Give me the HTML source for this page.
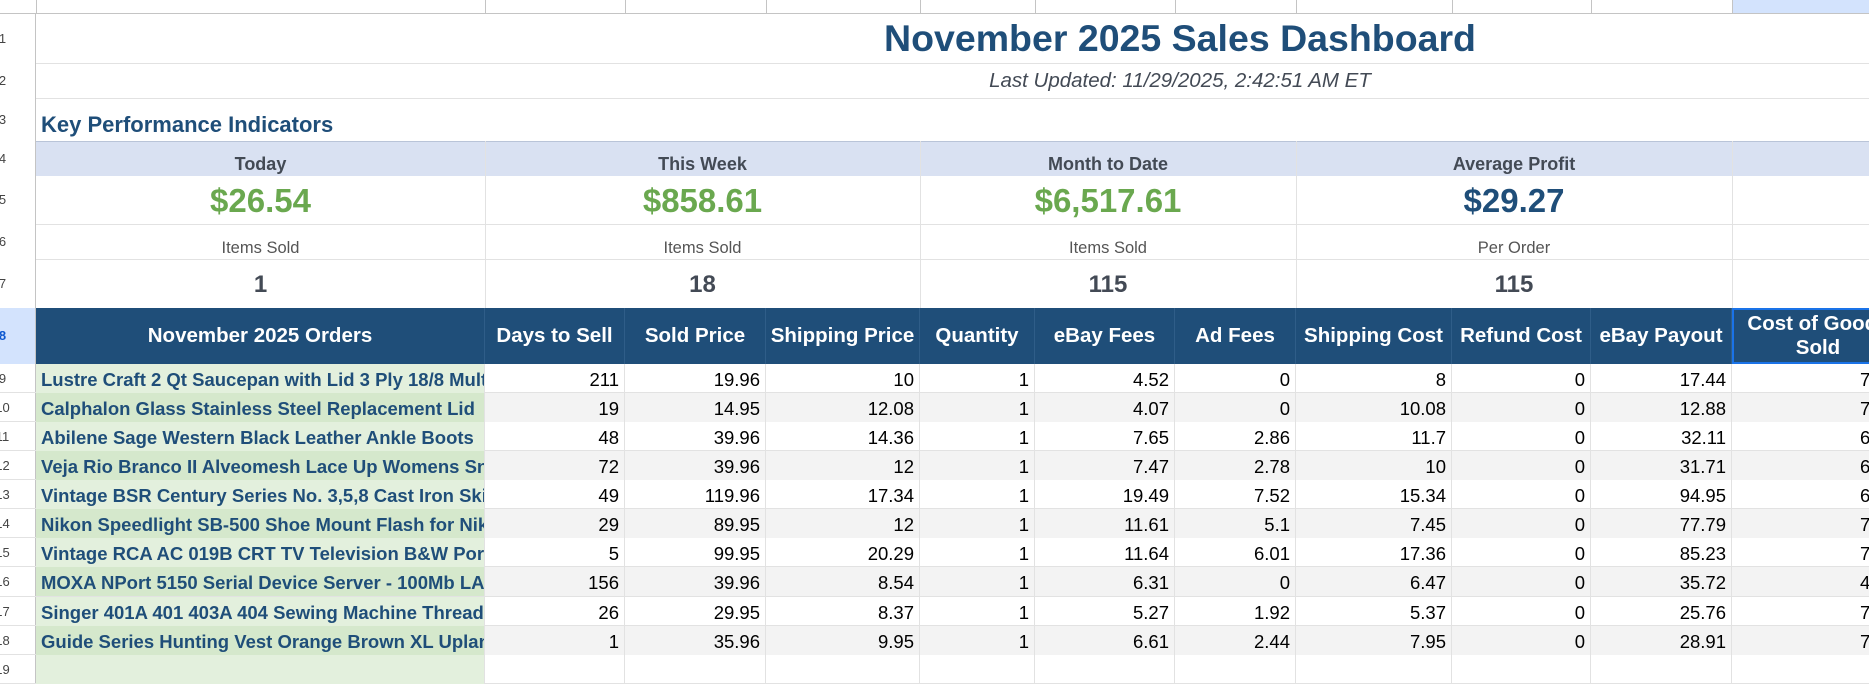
<!DOCTYPE html>
<html><head><meta charset="utf-8"><style>
*{box-sizing:border-box;margin:0;padding:0}
body{width:1869px;height:663px;overflow:hidden;background:#fff;font-family:"Liberation Sans",Arial,sans-serif;position:relative}
.a{position:absolute}
.hl{position:absolute;left:36px;width:1833px;height:1px;background:#e2e2e2}
.vl{position:absolute;width:1px;background:#e2e2e2}
.rn{position:absolute;left:-30px;width:66px;font-size:13px;color:#444;text-align:center;border-right:1px solid #c4c4c4;background:#fff}
.t{position:absolute;display:flex;align-items:flex-end;justify-content:center;white-space:nowrap;overflow:hidden}
.r{position:absolute;left:0;width:1869px;height:29px;border-bottom:1px solid #e2e2e2}
.r>div{position:absolute;top:0;height:29px;font-size:18.5px;color:#000;text-align:right;padding:5px 5px 0 0;border-right:1px solid #e2e2e2;white-space:nowrap;overflow:hidden}
.r>div:nth-child(1){left:36px;width:449px;text-align:left;padding-left:5px;font-weight:bold;color:#1f4e79;background:#e3f0dd}
.r.e>div:nth-child(1){background:#d5e8cc}
.r.e>div{background:#f3f3f3}
.r>div:nth-child(2){left:485px;width:140px}
.r>div:nth-child(3){left:625px;width:141px}
.r>div:nth-child(4){left:766px;width:154px}
.r>div:nth-child(5){left:920px;width:115px}
.r>div:nth-child(6){left:1035px;width:140px}
.r>div:nth-child(7){left:1175px;width:121px}
.r>div:nth-child(8){left:1296px;width:156px}
.r>div:nth-child(9){left:1452px;width:139px}
.r>div:nth-child(10){left:1591px;width:141px}
.r>div:nth-child(11){left:1732px;width:170px}
.h{position:absolute;top:308px;height:56px;background:#1f4e79;color:#fff;font-weight:bold;font-size:20.5px;display:flex;align-items:center;justify-content:center;text-align:center;border-right:1px solid #2f5d88;line-height:24px;white-space:nowrap}
.kl{font-size:18px;font-weight:bold;color:#434a55}
.kv{font-size:33px;font-weight:bold;color:#6aa84f}
.ks{font-size:16.5px;color:#555}
.kc{font-size:24px;font-weight:bold;color:#434a55}
</style></head><body>
<div class="a" style="left:0;top:0;width:1869px;height:14px;background:#fff;border-bottom:1px solid #c4c4c4"></div>
<div class="a" style="left:1732px;top:0;width:137px;height:14px;background:#d3e3fd;border-bottom:1px solid #c4c4c4"></div>
<div class="a" style="left:36px;top:0;width:1px;height:14px;background:#c4c4c4"></div>
<div class="a" style="left:485px;top:0;width:1px;height:14px;background:#c4c4c4"></div>
<div class="a" style="left:625px;top:0;width:1px;height:14px;background:#c4c4c4"></div>
<div class="a" style="left:766px;top:0;width:1px;height:14px;background:#c4c4c4"></div>
<div class="a" style="left:920px;top:0;width:1px;height:14px;background:#c4c4c4"></div>
<div class="a" style="left:1035px;top:0;width:1px;height:14px;background:#c4c4c4"></div>
<div class="a" style="left:1175px;top:0;width:1px;height:14px;background:#c4c4c4"></div>
<div class="a" style="left:1296px;top:0;width:1px;height:14px;background:#c4c4c4"></div>
<div class="a" style="left:1452px;top:0;width:1px;height:14px;background:#c4c4c4"></div>
<div class="a" style="left:1591px;top:0;width:1px;height:14px;background:#c4c4c4"></div>
<div class="a" style="left:1732px;top:0;width:1px;height:14px;background:#c4c4c4"></div>

<div class="hl" style="top:63px"></div>
<div class="hl" style="top:98px"></div>
<div class="a" style="left:36px;top:141px;width:1833px;height:35px;background:#d9e1f2;border-top:1px solid #b9c4d8"></div>
<div class="hl" style="top:224px"></div>
<div class="hl" style="top:259px"></div>
<div class="vl" style="left:485px;top:141px;height:167px"></div>
<div class="vl" style="left:920px;top:141px;height:167px"></div>
<div class="vl" style="left:1296px;top:141px;height:167px"></div>
<div class="vl" style="left:1732px;top:141px;height:167px"></div>

<div class="rn" style="top:14px;height:49px;line-height:49px">1</div>
<div class="rn" style="top:63px;height:35px;line-height:35px">2</div>
<div class="rn" style="top:98px;height:43px;line-height:43px">3</div>
<div class="rn" style="top:141px;height:35px;line-height:35px">4</div>
<div class="rn" style="top:176px;height:48px;line-height:48px">5</div>
<div class="rn" style="top:224px;height:35px;line-height:35px">6</div>
<div class="rn" style="top:259px;height:49px;line-height:49px">7</div>
<div class="rn" style="top:308px;height:56px;line-height:56px;background:#d3e3fd;font-weight:bold;color:#0b57d0">8</div>
<div class="rn" style="top:364px;height:29px;line-height:29px">9</div>
<div class="rn" style="top:393px;height:29px;line-height:29px">10</div>
<div class="rn" style="top:422px;height:29px;line-height:29px">11</div>
<div class="rn" style="top:451px;height:29px;line-height:29px">12</div>
<div class="rn" style="top:480px;height:29px;line-height:29px">13</div>
<div class="rn" style="top:509px;height:29px;line-height:29px">14</div>
<div class="rn" style="top:538px;height:29px;line-height:29px">15</div>
<div class="rn" style="top:567px;height:30px;line-height:30px">16</div>
<div class="rn" style="top:597px;height:29px;line-height:29px">17</div>
<div class="rn" style="top:626px;height:29px;line-height:29px">18</div>
<div class="rn" style="top:655px;height:29px;line-height:29px">19</div>

<div class="t" style="left:780px;width:800px;top:14px;height:49px;padding-bottom:3px;font-size:37.5px;font-weight:bold;color:#1f4e79">November 2025 Sales Dashboard</div>
<div class="t" style="left:780px;width:800px;top:63px;height:35px;padding-bottom:5px;font-size:20.5px;font-style:italic;color:#434a55">Last Updated: 11/29/2025, 2:42:51 AM ET</div>
<div class="t" style="left:41px;width:500px;top:98px;height:43px;padding-bottom:3px;justify-content:flex-start;font-size:22px;font-weight:bold;color:#1f4e79">Key Performance Indicators</div>

<div class="t kl" style="left:36px;width:449px;top:141px;height:35px;padding-bottom:1px">Today</div>
<div class="t kl" style="left:485px;width:435px;top:141px;height:35px;padding-bottom:1px">This Week</div>
<div class="t kl" style="left:920px;width:376px;top:141px;height:35px;padding-bottom:1px">Month to Date</div>
<div class="t kl" style="left:1296px;width:436px;top:141px;height:35px;padding-bottom:1px">Average Profit</div>

<div class="t kv" style="left:36px;width:449px;top:176px;height:48px;padding-bottom:4px">$26.54</div>
<div class="t kv" style="left:485px;width:435px;top:176px;height:48px;padding-bottom:4px">$858.61</div>
<div class="t kv" style="left:920px;width:376px;top:176px;height:48px;padding-bottom:4px">$6,517.61</div>
<div class="t kv" style="left:1296px;width:436px;top:176px;height:48px;padding-bottom:4px;color:#1f4e79">$29.27</div>

<div class="t ks" style="left:36px;width:449px;top:224px;height:35px;padding-bottom:1px">Items Sold</div>
<div class="t ks" style="left:485px;width:435px;top:224px;height:35px;padding-bottom:1px">Items Sold</div>
<div class="t ks" style="left:920px;width:376px;top:224px;height:35px;padding-bottom:1px">Items Sold</div>
<div class="t ks" style="left:1296px;width:436px;top:224px;height:35px;padding-bottom:1px">Per Order</div>

<div class="t kc" style="left:36px;width:449px;top:259px;height:49px;padding-bottom:9px">1</div>
<div class="t kc" style="left:485px;width:435px;top:259px;height:49px;padding-bottom:9px">18</div>
<div class="t kc" style="left:920px;width:376px;top:259px;height:49px;padding-bottom:9px">115</div>
<div class="t kc" style="left:1296px;width:436px;top:259px;height:49px;padding-bottom:9px">115</div>

<div class="h" style="left:36px;width:449px">November 2025 Orders</div>
<div class="h" style="left:485px;width:140px">Days to Sell</div>
<div class="h" style="left:625px;width:141px">Sold Price</div>
<div class="h" style="left:766px;width:154px">Shipping Price</div>
<div class="h" style="left:920px;width:115px">Quantity</div>
<div class="h" style="left:1035px;width:140px">eBay Fees</div>
<div class="h" style="left:1175px;width:121px">Ad Fees</div>
<div class="h" style="left:1296px;width:156px">Shipping Cost</div>
<div class="h" style="left:1452px;width:139px">Refund Cost</div>
<div class="h" style="left:1591px;width:141px">eBay Payout</div>
<div class="h" style="left:1732px;width:172px;border:2px solid #1a73e8">Cost of Goods<br>Sold</div>

<div class="r" style="top:364px"><div>Lustre Craft 2 Qt Saucepan with Lid 3 Ply 18/8 Multi</div><div>211</div><div>19.96</div><div>10</div><div>1</div><div>4.52</div><div>0</div><div>8</div><div>0</div><div>17.44</div><div>7.50</div></div>
<div class="r e" style="top:393px"><div>Calphalon Glass Stainless Steel Replacement Lid</div><div>19</div><div>14.95</div><div>12.08</div><div>1</div><div>4.07</div><div>0</div><div>10.08</div><div>0</div><div>12.88</div><div>7.50</div></div>
<div class="r" style="top:422px"><div>Abilene Sage Western Black Leather Ankle Boots</div><div>48</div><div>39.96</div><div>14.36</div><div>1</div><div>7.65</div><div>2.86</div><div>11.7</div><div>0</div><div>32.11</div><div>6.50</div></div>
<div class="r e" style="top:451px"><div>Veja Rio Branco II Alveomesh Lace Up Womens Sneakers</div><div>72</div><div>39.96</div><div>12</div><div>1</div><div>7.47</div><div>2.78</div><div>10</div><div>0</div><div>31.71</div><div>6.50</div></div>
<div class="r" style="top:480px"><div>Vintage BSR Century Series No. 3,5,8 Cast Iron Skillet</div><div>49</div><div>119.96</div><div>17.34</div><div>1</div><div>19.49</div><div>7.52</div><div>15.34</div><div>0</div><div>94.95</div><div>6.50</div></div>
<div class="r e" style="top:509px"><div>Nikon Speedlight SB-500 Shoe Mount Flash for Nikon</div><div>29</div><div>89.95</div><div>12</div><div>1</div><div>11.61</div><div>5.1</div><div>7.45</div><div>0</div><div>77.79</div><div>7.50</div></div>
<div class="r" style="top:538px"><div>Vintage RCA AC 019B CRT TV Television B&amp;W Portable</div><div>5</div><div>99.95</div><div>20.29</div><div>1</div><div>11.64</div><div>6.01</div><div>17.36</div><div>0</div><div>85.23</div><div>7.50</div></div>
<div class="r e" style="top:567px;height:30px"><div>MOXA NPort 5150 Serial Device Server - 100Mb LAN</div><div>156</div><div>39.96</div><div>8.54</div><div>1</div><div>6.31</div><div>0</div><div>6.47</div><div>0</div><div>35.72</div><div>4.50</div></div>
<div class="r" style="top:597px"><div>Singer 401A 401 403A 404 Sewing Machine Thread Guide</div><div>26</div><div>29.95</div><div>8.37</div><div>1</div><div>5.27</div><div>1.92</div><div>5.37</div><div>0</div><div>25.76</div><div>7.50</div></div>
<div class="r e" style="top:626px"><div>Guide Series Hunting Vest Orange Brown XL Upland</div><div>1</div><div>35.96</div><div>9.95</div><div>1</div><div>6.61</div><div>2.44</div><div>7.95</div><div>0</div><div>28.91</div><div>7.50</div></div>
<div class="r" style="top:655px"><div></div><div></div><div></div><div></div><div></div><div></div><div></div><div></div><div></div><div></div><div></div></div>
</body></html>
